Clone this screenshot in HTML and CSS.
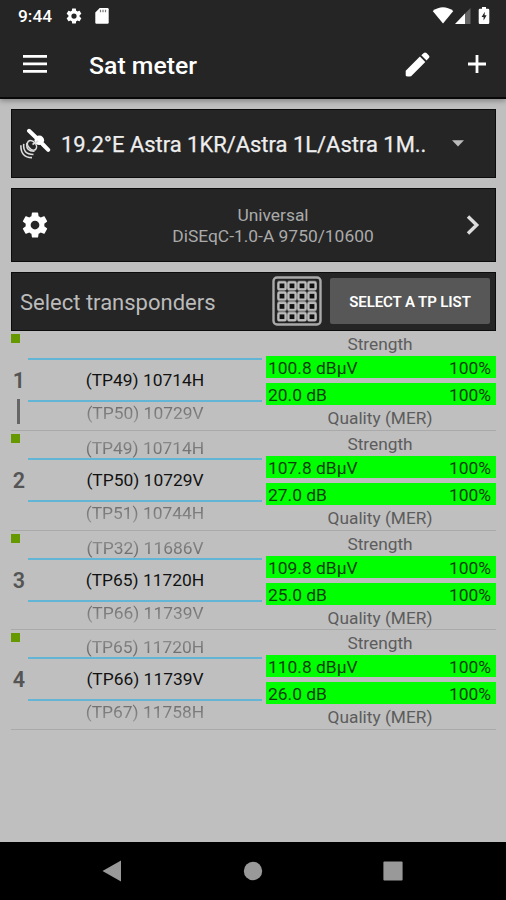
FILE: index.html
```
<!DOCTYPE html>
<html lang="en">
<head>
    <meta charset="UTF-8">
    <meta name="viewport" content="width=device-width, initial-scale=1.0">
    <title>Sat meter</title>
    <link rel="stylesheet" href="styles.css">
</head>
<body>
    <header class="header">
        <div class="status-bar">
            <span class="clock">9:44</span>
            <svg class="status-gear" width="18" height="18" viewBox="0 0 24 24"><path fill="#fff" fill-rule="evenodd" d="M19.43 12.98c.04-.32.07-.64.07-.98s-.03-.66-.07-.98l2.11-1.65c.19-.15.24-.42.12-.64l-2-3.46c-.12-.22-.39-.3-.61-.22l-2.49 1c-.52-.4-1.08-.73-1.69-.98l-.38-2.65A.49.49 0 0 0 14 2h-4c-.25 0-.46.18-.49.42l-.38 2.65c-.61.25-1.17.59-1.69.98l-2.49-1c-.23-.09-.49 0-.61.22l-2 3.46c-.13.22-.07.49.12.64l2.11 1.65c-.04.32-.07.65-.07.98s.03.66.07.98l-2.11 1.65c-.19.15-.24.42-.12.64l2 3.46c.12.22.39.3.61.22l2.49-1c.52.4 1.08.73 1.69.98l.38 2.65c.03.24.24.42.49.42h4c.25 0 .46-.18.49-.42l.38-2.65c.61-.25 1.17-.59 1.69-.98l2.49 1c.23.09.49 0 .61-.22l2-3.46c.12-.22.07-.49-.12-.64zM12 15.5a3.5 3.5 0 1 1 0-7 3.5 3.5 0 0 1 0 7z"/></svg>
            <svg class="status-card" width="14" height="16" viewBox="0 0 14 16"><path fill="#fff" d="M4.7 0H12.5Q13.7 0 13.7 1.2V14.6Q13.7 15.8 12.5 15.8H1.5Q.3 15.8 .3 14.6V4.6z"/><path stroke="#777" stroke-width="1.2" d="M5.5 1.8v2.4M8 1.8v2.4M10.5 1.8v2.4"/></svg>
            <svg class="status-wifi" width="22" height="17" viewBox="0 0 22 17"><path fill="#fff" d="M.7 4Q11-3.5 21.3 4L11 16.5z"/></svg>
            <svg class="status-signal" width="16" height="16" viewBox="0 0 16 16"><path fill="#666" d="M15.5 0v16H9V6.5z"/><path fill="#fff" d="M10 5.6V16H0z"/></svg>
            <svg class="status-battery" width="12" height="18" viewBox="0 0 12 18"><path fill="#fff" d="M4 0h4v1.8h2Q11.3 1.8 11.3 3v12.8q0 1.2-1.2 1.2H1.9Q.7 17 .7 15.8V3q0-1.2 1.2-1.2H4z"/><path fill="#252525" d="M6.8 4.7 3.6 10h2v3.6l3-5.3H6.6z"/></svg>
        </div>
        <div class="app-bar">
            <svg class="menu-icon" width="24" height="18" viewBox="0 0 24 18"><path stroke="#fff" stroke-width="2.7" d="M0 1.4h24M0 8.9h24M0 16.4h24"/></svg>
            <h1>Sat meter</h1>
            <svg class="edit-icon" width="25" height="25" viewBox="0 0 25 25"><path fill="#fff" d="M.7 18.8 14.9 4.6 20.3 10 6.1 24.2Q.7 25 .7 23.5zM16.3 3.3 18.8.9Q20.2-.1 21.5 1.1L23.9 3.5Q25 4.8 23.9 6L21.5 8.5z"/></svg>
            <svg class="add-icon" width="18" height="18" viewBox="0 0 18 18"><path stroke="#fff" stroke-width="2.8" d="M9 0v18M0 9h18"/></svg>
        </div>
    </header>

    <main class="content">
        <div class="panel satellite">
            <svg width="32" height="32" viewBox="0 0 32 32">
                <path stroke="#fff" stroke-width="4" stroke-linecap="round" d="M9 2.8 15.5 9M22.5 16 28.2 21.8"/>
                <path stroke="#fff" stroke-width="2.4" d="M13 7 25 19"/>
                <circle cx="19.3" cy="12.3" r="4.8" fill="#fff"/>
                <g fill="none" stroke="#ddd" stroke-width="1.6">
                    <ellipse cx="12" cy="17.3" rx="5.4" ry="3.7" transform="rotate(48 12 17.3)"/>
                    <path d="M12.5 16.5 18 13M7 15Q5.5 23.5 14.5 23.2M3.8 15.8Q2.3 26.2 13.5 26.5M.9 17.2Q.5 29.5 12 29.6"/>
                </g>
            </svg>
            <span class="satellite-name">19.2°E Astra 1KR/Astra 1L/Astra 1M..</span>
            <svg class="dropdown" width="12" height="7" viewBox="0 0 12 7"><path fill="#bbb" d="M0 .2h12L6 6.5z"/></svg>
        </div>

        <div class="panel lnb">
            <svg width="30" height="30" viewBox="0 0 24 24"><path fill="#fff" fill-rule="evenodd" d="M19.43 12.98c.04-.32.07-.64.07-.98s-.03-.66-.07-.98l2.11-1.65c.19-.15.24-.42.12-.64l-2-3.46c-.12-.22-.39-.3-.61-.22l-2.49 1c-.52-.4-1.08-.73-1.69-.98l-.38-2.65A.49.49 0 0 0 14 2h-4c-.25 0-.46.18-.49.42l-.38 2.65c-.61.25-1.17.59-1.69.98l-2.49-1c-.23-.09-.49 0-.61.22l-2 3.46c-.13.22-.07.49.12.64l2.11 1.65c-.04.32-.07.65-.07.98s.03.66.07.98l-2.11 1.65c-.19.15-.24.42-.12.64l2 3.46c.12.22.39.3.61.22l2.49-1c.52.4 1.08.73 1.69.98l.38 2.65c.03.24.24.42.49.42h4c.25 0 .46-.18.49-.42l.38-2.65c.61-.25 1.17-.59 1.69-.98l2.49 1c.23.09.49 0 .61-.22l2-3.46c.12-.22.07-.49-.12-.64zM12 15.5a3.5 3.5 0 1 1 0-7 3.5 3.5 0 0 1 0 7z"/></svg>
            <p class="lnb-text">Universal<br>DiSEqC-1.0-A 9750/10600</p>
            <svg width="14" height="20" viewBox="0 0 14 20"><path fill="none" stroke="#ddd" stroke-width="3.4" d="M2 1.5 10.7 10 2 18.5"/></svg>
        </div>

        <div class="panel transponders">
            <span class="transponders-title">Select transponders</span>
            <svg class="grid-icon" width="50" height="50" viewBox="0 0 50 50">
                <defs>
                    <pattern id="cells" x="5" y="4.7" width="10" height="10.3" patternUnits="userSpaceOnUse">
                        <rect x="1.4" y="1.5" width="7.2" height="7.2" rx="1" fill="#111" stroke="#bbb" stroke-width="2.4"/>
                    </pattern>
                </defs>
                <rect x="1.5" y="1.5" width="47" height="47" rx="3.5" fill="#222" stroke="#aaa" stroke-width="2.4"/>
                <rect x="5" y="4.7" width="40" height="41.2" fill="url(#cells)"/>
            </svg>
            <button class="list-button">SELECT A TP LIST</button>
        </div>

        <div class="rows">
            <div class="row">
                <div class="index first">1</div>
                <div class="picker">
                    <span class="prev"></span>
                    <span class="current">(TP49) 10714H</span>
                    <span class="next">(TP50) 10729V</span>
                </div>
                <div class="meter">
                    <span class="label">Strength</span>
                    <div class="bar"><span>100.8 dBµV</span><span>100%</span></div>
                    <div class="bar"><span>20.0 dB</span><span>100%</span></div>
                    <span class="label">Quality (MER)</span>
                </div>
            </div>
            <div class="row">
                <div class="index">2</div>
                <div class="picker">
                    <span class="prev">(TP49) 10714H</span>
                    <span class="current">(TP50) 10729V</span>
                    <span class="next">(TP51) 10744H</span>
                </div>
                <div class="meter">
                    <span class="label">Strength</span>
                    <div class="bar"><span>107.8 dBµV</span><span>100%</span></div>
                    <div class="bar"><span>27.0 dB</span><span>100%</span></div>
                    <span class="label">Quality (MER)</span>
                </div>
            </div>
            <div class="row">
                <div class="index">3</div>
                <div class="picker">
                    <span class="prev">(TP32) 11686V</span>
                    <span class="current">(TP65) 11720H</span>
                    <span class="next">(TP66) 11739V</span>
                </div>
                <div class="meter">
                    <span class="label">Strength</span>
                    <div class="bar"><span>109.8 dBµV</span><span>100%</span></div>
                    <div class="bar"><span>25.0 dB</span><span>100%</span></div>
                    <span class="label">Quality (MER)</span>
                </div>
            </div>
            <div class="row">
                <div class="index">4</div>
                <div class="picker">
                    <span class="prev">(TP65) 11720H</span>
                    <span class="current">(TP66) 11739V</span>
                    <span class="next">(TP67) 11758H</span>
                </div>
                <div class="meter">
                    <span class="label">Strength</span>
                    <div class="bar"><span>110.8 dBµV</span><span>100%</span></div>
                    <div class="bar"><span>26.0 dB</span><span>100%</span></div>
                    <span class="label">Quality (MER)</span>
                </div>
            </div>
        </div>
    </main>

    <nav class="nav-bar">
        <svg width="20" height="22" viewBox="0 0 20 22"><path fill="#999" d="M19 .5v21L.5 11z"/></svg>
        <svg width="20" height="20" viewBox="0 0 20 20"><circle cx="10" cy="10" r="9.2" fill="#999"/></svg>
        <svg width="20" height="20" viewBox="0 0 20 20"><rect x=".4" y=".4" width="19.2" height="19.2" rx="1" fill="#999"/></svg>
    </nav>
</body>
</html>
```
FILE: styles.css
```
* {
    box-sizing: border-box;
}
body {
    margin: 0;
    height: 900px;
    display: flex;
    flex-direction: column;
    overflow: hidden;
    background-color: #bfbfbf;
    font-family: Roboto, sans-serif;
}
svg {
    flex-shrink: 0;
}
.header {
    height: 99px;
    background-color: #252525;
    color: #fff;
    border-bottom: 2px solid #080808;
    box-shadow: 0 2px 5px rgba(0, 0, 0, 0.3);
}
.status-bar {
    display: flex;
    align-items: center;
    height: 31px;
    padding: 0 16px 0 18px;
}
.clock {
    font-size: 17.3px;
    font-weight: 500;
}
.status-gear {
    margin-left: 13px;
}
.status-card {
    margin-left: 12px;
}
.status-wifi {
    margin-left: auto;
}
.status-signal {
    margin-left: 1px;
}
.status-battery {
    margin-left: 7px;
}
.app-bar {
    display: flex;
    align-items: center;
    height: 67px;
    padding: 0 20px 0 23px;
}
.menu-icon, .add-icon {
    margin-bottom: 1px;
}
h1 {
    margin: 2px auto 0 42px;
    font-size: 24.8px;
    font-weight: 500;
}
.add-icon {
    margin-left: 38px;
}
.content {
    flex: 1;
    padding: 10px 10px 0 11px;
}
.panel {
    display: flex;
    align-items: center;
    background-color: #252525;
    border: 1px solid #0c0c0c;
    margin-bottom: 10px;
}
.satellite {
    height: 69px;
    padding: 0 31px 0 8px;
}
.satellite-name {
    margin: 1px 0 0 9px;
    font-size: 21.95px;
    color: #eee;
    -webkit-text-stroke: 0.25px #eee;
    white-space: nowrap;
}
.dropdown {
    margin-left: auto;
}
.lnb {
    height: 74px;
    padding: 0 15px 0 8px;
}
.lnb-text {
    flex: 1;
    margin: 1px 0 0 30px;
    text-align: center;
    font-size: 17.4px;
    line-height: 20.5px;
    color: #aaa;
}
.transponders {
    height: 59px;
    margin-bottom: 0;
    padding: 0 5px 1px 8px;
}
.transponders-title {
    margin-top: 3px;
    font-size: 22px;
    color: #bbb;
}
.grid-icon {
    margin-left: auto;
}
.list-button {
    width: 160px;
    height: 46px;
    margin-left: 8px;
    padding: 1px 0 0;
    border: none;
    border-radius: 2px;
    background-color: #575757;
    color: #fff;
    font-family: inherit;
    font-size: 15px;
    font-weight: 600;
    letter-spacing: -0.1px;
}
.row {
    display: grid;
    grid-template-columns: 17px 234px 230px;
    height: 99.75px;
    border-bottom: 1px solid #aaa;
}
.index {
    position: relative;
    padding-right: 1px;
    font-size: 21.5px;
    font-weight: 600;
    line-height: 100px;
    text-align: center;
    color: #555;
}
/* green state square in the corner of every row */
.index::before {
    content: "";
    position: absolute;
    left: 0;
    top: 3px;
    width: 9px;
    height: 9px;
    background-color: #669900;
}
.first::after {
    content: "";
    position: absolute;
    left: 6px;
    top: 68px;
    width: 3px;
    height: 25px;
    background-color: #666;
}
.picker {
    display: grid;
    grid-template-rows: 27px 44px 27px;
    text-align: center;
    font-size: 17.4px;
    color: #111;
}
.prev, .next {
    line-height: 20px;
    color: #555;
}
.prev {
    padding-top: 7px;
    mask-image: linear-gradient(to bottom, rgba(0, 0, 0, 0.4) 20%, rgba(0, 0, 0, 0.85));
}
.next {
    padding-top: 1px;
    mask-image: linear-gradient(to top, rgba(0, 0, 0, 0.4) 20%, rgba(0, 0, 0, 0.85));
}
.current {
    line-height: 41px;
    border-top: 2px solid #63b5d6;
    border-bottom: 2px solid #63b5d6;
}
.meter {
    margin-left: 4px;
    width: 230px;
}
.label {
    display: block;
    height: 25px;
    padding-right: 2px;
    line-height: 26px;
    text-align: center;
    font-size: 17.3px;
    color: #5c5c5c;
}
.bar {
    display: flex;
    justify-content: space-between;
    height: 22px;
    padding: 0 5px 0 2px;
    margin-bottom: 5px;
    line-height: 24px;
    font-size: 17.4px;
    background-color: #00ff00;
    color: #0c3d0c;
}
.bar + .bar {
    margin-bottom: 0;
}
.nav-bar {
    display: flex;
    justify-content: space-between;
    align-items: center;
    height: 58px;
    padding: 0 103px 0 102px;
    background-color: #000;
}
```
